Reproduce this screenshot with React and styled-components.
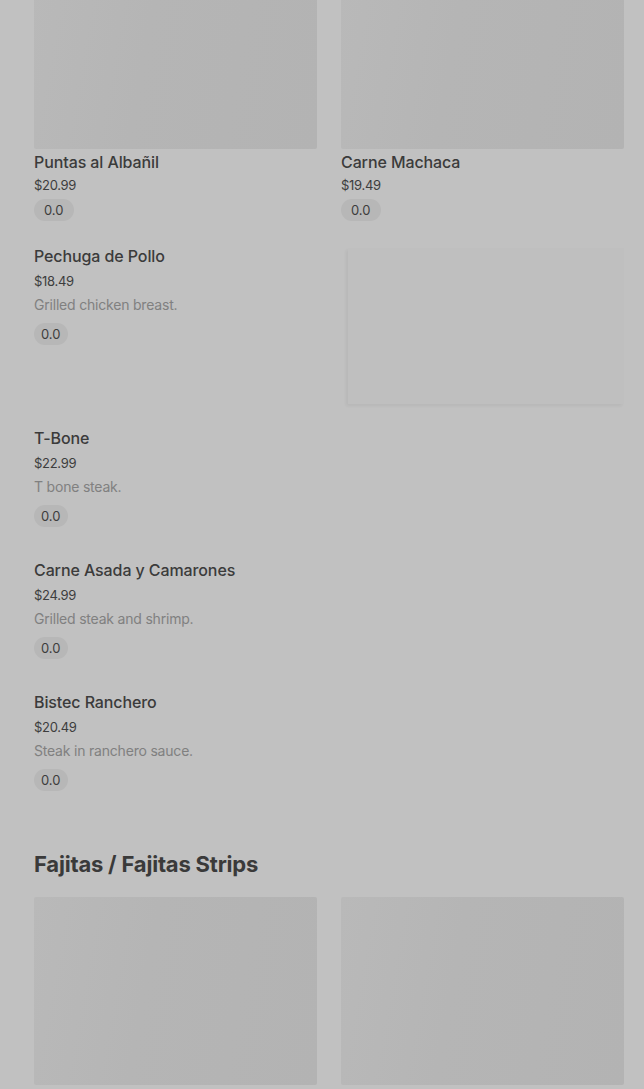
import React from 'react'
import styled, { createGlobalStyle } from 'styled-components'

const GlobalStyle = createGlobalStyle`
  html, body {
    margin: 0;
    padding: 0;
    background: #c1c1c1;
    overflow: hidden;
  }
  body {
    font-family: Inter, "Noto Sans", "Liberation Sans", sans-serif;
    -webkit-font-smoothing: antialiased;
  }
`

const gridItems = [
  { name: 'Puntas al Albañil', price: '$20.99' },
  { name: 'Carne Machaca', price: '$19.49' },
]

const listItems = [
  { name: 'Pechuga de Pollo', price: '$18.49', desc: 'Grilled chicken breast.', image: true },
  { name: 'T-Bone', price: '$22.99', desc: 'T bone steak.' },
  { name: 'Carne Asada y Camarones', price: '$24.99', desc: 'Grilled steak and shrimp.' },
  { name: 'Bistec Ranchero', price: '$20.49', desc: 'Steak in ranchero sauce.' },
]

const App = () => {
  return (
    <>
      <GlobalStyle />
      <Page>
        <Grid>
          {gridItems.map((item) => (
            <Card key={item.name}>
              <Photo />
              <Title $top={3}>{item.name}</Title>
              <Price $compact>{item.price}</Price>
              <Rating $wide>0.0</Rating>
            </Card>
          ))}
        </Grid>

        <List>
          {listItems.map((item) => (
            <Row key={item.name}>
              <Info>
                <Title>{item.name}</Title>
                <Price>{item.price}</Price>
                <Desc>{item.desc}</Desc>
                <Rating>0.0</Rating>
              </Info>
              {item.image && <Thumb />}
            </Row>
          ))}
        </List>

        <Section>Fajitas / Fajitas Strips</Section>
        <Grid>
          <Card>
            <Photo />
          </Card>
          <Card>
            <Photo />
          </Card>
        </Grid>
      </Page>
    </>
  )
}

export default App

const Page = styled.div`
  margin-top: -39px;
  padding: 0 20px 0 34px;
  color: #3a3a3a;
`

const Grid = styled.div`
  display: grid;
  grid-template-columns: 1fr 1fr;
  column-gap: 24px;
`

const Card = styled.div`
  display: flex;
  flex-direction: column;
  align-items: flex-start;
`

const Photo = styled.div`
  width: 100%;
  height: 188px;
  border-radius: 2px;
  background: linear-gradient(100deg, #b9b9b9 0%, #b5b5b5 40%, #b3b3b3 100%);
`

const Title = styled.div`
  margin-top: ${(p) => p.$top || 0}px;
  font-size: 16px;
  line-height: 20px;
  font-weight: 500;
  color: #3b3b3b;
  letter-spacing: -0.1px;
`

const Price = styled.div`
  margin-top: ${(p) => (p.$compact ? 4 : 5)}px;
  font-size: 13px;
  line-height: ${(p) => (p.$compact ? 18 : 20)}px;
  color: #3d3d3d;
  letter-spacing: -0.3px;
`

const Desc = styled.div`
  margin-top: 4px;
  font-size: 14px;
  line-height: 20px;
  color: #808080;
  letter-spacing: -0.2px;
`

const Rating = styled.span`
  display: inline-flex;
  align-items: center;
  height: 22px;
  margin-top: ${(p) => (p.$wide ? 5 : 8)}px;
  padding: 0 ${(p) => (p.$wide ? 10 : 7)}px;
  border-radius: 11px;
  background: #b7b7b7;
  font-size: 13px;
  color: #3d3d3d;
`

const List = styled.div`
  margin-top: 13px;
  display: flex;
  flex-direction: column;
`

const Row = styled.div`
  display: flex;
  justify-content: space-between;
  padding: 12px 0;
`

const Info = styled.div`
  display: flex;
  flex-direction: column;
  align-items: flex-start;
  padding-bottom: 9px;
`

const Thumb = styled.div`
  margin-top: 2px;
  width: 276px;
  height: 156px;
  background: #bfbfbf;
  box-shadow: -2px 2px 3px rgba(0, 0, 0, 0.05);
`

const Section = styled.h2`
  margin: 38px 0 19px;
  font-size: 22px;
  line-height: 28px;
  font-weight: 700;
  letter-spacing: -0.2px;
  color: #3a3a3a;
`
